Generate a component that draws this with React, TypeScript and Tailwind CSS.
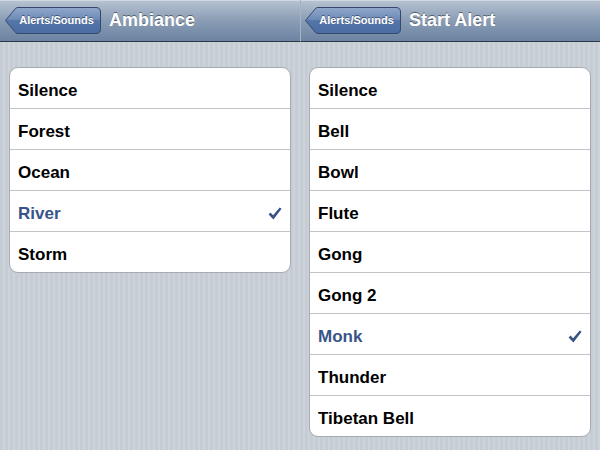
import React from "react";

type Panel = {
  title: string;
  items: string[];
  selected: string;
};

const panels: Panel[] = [
  {
    title: "Ambiance",
    items: ["Silence", "Forest", "Ocean", "River", "Storm"],
    selected: "River",
  },
  {
    title: "Start Alert",
    items: ["Silence", "Bell", "Bowl", "Flute", "Gong", "Gong 2", "Monk", "Thunder", "Tibetan Bell"],
    selected: "Monk",
  },
];

const BackButton = () => (
  <div className="relative h-[27px] w-[96px] flex items-center justify-center pl-[9px] pr-[2px]">
    <svg className="absolute inset-0" width="96" height="27" viewBox="0 0 96 27">
      <defs>
        <linearGradient id="back" x1="0" y1="0" x2="0" y2="1">
          <stop offset="0" stopColor="#91a8cb" />
          <stop offset="0.5" stopColor="#6a88b5" />
          <stop offset="0.5" stopColor="#5576a9" />
          <stop offset="1" stopColor="#4a6ca2" />
        </linearGradient>
      </defs>
      <path
        d="M0.5 13.5 L10.5 1.5 Q11.5 0.5 13 0.5 L91 0.5 Q95.5 0.5 95.5 5 L95.5 22 Q95.5 26.5 91 26.5 L13 26.5 Q11.5 26.5 10.5 25.5 Z"
        fill="url(#back)"
        stroke="#34496d"
        strokeWidth="1"
      />
    </svg>
    <span className="relative text-[11px] font-bold text-white [text-shadow:0_-1px_0_rgba(0,0,0,0.45)]">
      Alerts/Sounds
    </span>
  </div>
);

const Check = () => (
  <svg width="14" height="13" viewBox="0 0 14 13">
    <path d="M0.6 7.4 L2.5 5.6 L5.1 8.3 L11.7 0.4 L13.6 1.8 L5.4 12.4 Z" fill="#385487" />
  </svg>
);

const PanelView = ({ panel, first }: { panel: Panel; first: boolean }) => (
  <div className="w-[300px] h-full flex flex-col">
    <div
      className={`h-[42px] shrink-0 flex items-center gap-[8px] border-b border-[#2d3642] bg-gradient-to-b from-[#b8c3d2] via-[#8a9db5] to-[#6c83a2] shadow-[inset_0_1px_0_#d0d8e2] ${
        first ? "pl-[5px]" : "pl-[4px] border-l border-l-[#a6b3c4]"
      }`}
    >
      <BackButton />
      <span className="text-[18px] font-bold text-white [text-shadow:0_-1px_0_rgba(0,0,0,0.45)]">
        {panel.title}
      </span>
    </div>
    <div className="flex-1 pt-[25px] px-[9px] bg-[repeating-linear-gradient(90deg,#c5ccd4_0px,#c5ccd4_3px,#cdd3da_3px,#cdd3da_5px)]">
      <div className="bg-white rounded-[9px] border border-[#a7abb0] overflow-hidden">
        {panel.items.map((item, i) => (
          <div
            key={item}
            className={`flex items-center justify-between pt-[5px] pl-[8px] pr-[8px] text-[17px] font-bold ${
              i < panel.items.length - 1 ? "h-[41px] border-b border-[#c2c4c7]" : "h-[40px]"
            } ${item === panel.selected ? "text-[#385487]" : "text-black"}`}
          >
            <span>{item}</span>
            {item === panel.selected && <Check />}
          </div>
        ))}
      </div>
    </div>
  </div>
);

export default function App() {
  return (
    <div className="w-[600px] h-[450px] flex overflow-hidden font-['Liberation_Sans',Arial,sans-serif]">
      {panels.map((p, i) => (
        <PanelView key={p.title} panel={p} first={i === 0} />
      ))}
    </div>
  );
}
